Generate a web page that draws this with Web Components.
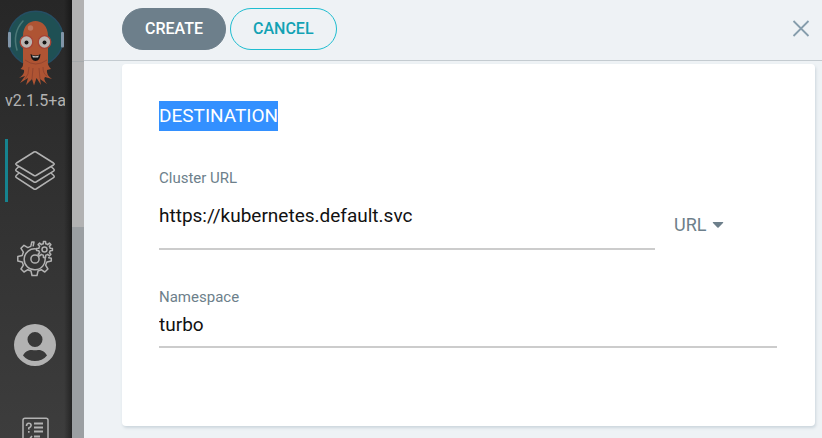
<!DOCTYPE html>
<html lang="en">
<head>
<meta charset="utf-8">
<meta name="viewport" content="width=device-width, initial-scale=1">
<title>Create application</title>
<style>
body { margin: 0; font-family: Roboto, "Liberation Sans", sans-serif; background: #eef2f5; }
</style>
</head>
<body>
<app-shell>
  <side-bar slot="side" version="v2.1.5+a">
    <nav-item label="Applications" icon="layers" active></nav-item>
    <nav-item label="Settings" icon="gears"></nav-item>
    <nav-item label="User info" icon="user"></nav-item>
    <nav-item label="Documentation" icon="docs"></nav-item>
  </side-bar>
  <action-bar>
    <pill-button kind="solid">CREATE</pill-button>
    <pill-button kind="outline">CANCEL</pill-button>
  </action-bar>
  <form-card heading="DESTINATION">
    <cluster-row>
      <text-field label="Cluster URL" value="https://kubernetes.default.svc" roomy></text-field>
      <kind-select slot="kind"></kind-select>
    </cluster-row>
    <text-field label="Namespace" value="turbo"></text-field>
  </form-card>
</app-shell>

<script>
const define = (name, html, setup) => {
  const template = document.createElement('template');
  template.innerHTML = '<style>*{box-sizing:border-box}:host{box-sizing:border-box}</style>' + html;
  customElements.define(name, class extends HTMLElement {
    constructor() {
      super();
      this.attachShadow({ mode: 'open' }).append(template.content.cloneNode(true));
    }
    connectedCallback() { if (setup) setup(this, this.shadowRoot); }
  });
};

/* Gear outline: n teeth, tooth tops at radius r, valleys at radius q. */
const gear = (cx, cy, n, r, q) => {
  const point = (rad, a) => (cx + rad * Math.cos(a)).toFixed(2) + ' ' + (cy + rad * Math.sin(a)).toFixed(2);
  const step = 2 * Math.PI / n;
  let d = '';
  for (let i = 0; i < n; i++) {
    const a = i * step - Math.PI / 2;
    d += (d ? 'L' : 'M') + point(q, a - step * .27) + 'L' + point(r, a - step * .17) +
      'L' + point(r, a + step * .17) + 'L' + point(q, a + step * .27) +
      `A${q} ${q} 0 0 1 ` + point(q, a + step * .73);
  }
  return d + 'Z';
};

const icons = {
  layers: `<g fill="none" stroke="#b2b2b2" stroke-width="1.5" stroke-linejoin="round" stroke-linecap="round">
    <path d="M20 2q1-.6 2 0L39.500 13q1.500 1 0 2L22 25.500q-1 .6-2 0L2.500 15q-1.500-1 0-2Z"/>
    <path d="M4.500 17 2.500 18.700q-1.500 1.300 0 2.500L20 32q1 .6 2 0L39.500 21.200q1.500-1.200 0-2.500L37.500 17"/>
    <path d="M4.500 23.500 2.500 25.200q-1.500 1.300 0 2.500L20 39q1 .6 2 0L39.500 27.700q1.500-1.200 0-2.500L37.500 23.500"/></g>`,
  gears: `<g transform="translate(0 1.500)" fill="none" stroke="#b2b2b2" stroke-width="1.500" stroke-linejoin="round" stroke-linecap="round">
    <path d="M20 3.500h-2.200l-1 4.400-3 1.200L10 6.800 7 9.800l2.400 3.800L8.200 17 3.800 18v4.500l4.400 1 1.200 3.200L7 30.500l3 3 3.800-2.300 3.200 1.300 1 4.500h5l1-4.500 3.200-1.300 3.600 2.300 3.100-3-2.300-3.800 1.300-3.200 4.400-1v-2.800l-2.600-.5M20 3.500l-.8 3.800"/>
    <path d="M22.500 10.500A10.500 10.500 0 1 0 31 19"/><circle cx="21" cy="20.500" r="4.100"/>
    <path d="${gear(30.500, 11, 8, 8, 5.800)}"/><circle cx="30.500" cy="11" r="2.500"/></g>`,
  user: `<path fill="#b2b2b2" fill-rule="evenodd" d="M21 0a21 21 0 1 0 0 42 21 21 0 0 0 0-42Zm0 8a7.500 7.500 0 1 1 0 15 7.500 7.500 0 0 1 0-15ZM9 31.500c2-4.500 6.500-5.800 9-5.500q3 .7 6 0c2.500-.3 7 1 9 5.500C30 35.300 25.500 37 21 37S12 35.300 9 31.500Z"/>`,
  docs: `<g fill="none" stroke="#b2b2b2"><rect x="9" y="7.200" width="25" height="31" rx="2" stroke-width="1.500"/>
    <path stroke-width="1.800" d="M20 12.500h9M20 16.500h9M20 20.500h9M20 25.500h6M20 30h9"/>
    <path stroke-width="1.600" d="M12.500 15q0-2.700 2.300-2.700t2.300 2.200q0 1.500-2.300 2.500v1.500M14.800 20v1.800M12 28l2 2 4-5"/></g>`
};

define('app-shell', `
<style>
:host { display: flex; height: 100vh; overflow: hidden; }
.strip { flex: none; width: 12px; background: linear-gradient(#a5a9ab, #a5a9ab) 0 61px / 100% 1px no-repeat, linear-gradient(#b2b2b2 227px, #9b9fa2 227px); }
main { flex: 1; min-width: 0; background: #eef2f5; }
</style>
<slot name="side"></slot><div class="strip"></div><main><slot></slot></main>`);

define('side-bar', `
<style>
:host { flex: none; display: flex; flex-direction: column; width: 72px; padding: 10px 7px 0 5px;
  background: linear-gradient(90deg, transparent 64px, #0006 72px), linear-gradient(#272727, #3d3d3d); }
.logo { flex: none; align-self: center; width: 60px; height: 80px; }
.version { flex: none; overflow: hidden; white-space: nowrap; color: #b2b2b2; font-size: 16px; line-height: 22px; }
nav { flex: none; display: flex; flex-direction: column; gap: 24px; margin-top: 27px; }
</style>
<svg class="logo" viewBox="5 10 60 80" role="img" aria-label="Argo">
  <circle cx="35.700" cy="38.500" r="27.300" fill="#1f5054" stroke="#264e63" stroke-width="1.500"/>
  <path d="M23 21Q12 33 17 50" fill="none" stroke="#4b7877" stroke-width="1.500" stroke-linecap="round"/>
  <rect x="8" y="32" width="3" height="15.500" rx="1" fill="#8195a8"/>
  <rect x="61" y="32" width="3" height="15.500" rx="1" fill="#8195a8"/>
  <path fill="#af5433" d="M23 36C23 16 48 16 48 36V61Q47 65 51 69L47 70Q46 75 52 79L45 77Q43 79 47 84L40 79 41 85 36.500 78 34 85.500 32 79 26 85 28 78 20 83 25 76 19 78Q25 74 24 70L20.500 69Q24 66 23 61Z"/>
  <path d="M25 60Q35.500 68 47 60M29 67q0 8-4 12M33 68l-1 11M39 68l1 11M43 67q0 7 4 9" fill="none" stroke="#94452f" stroke-width="1"/>
  <circle cx="30.500" cy="28" r="2.700" fill="#bd775e"/>
  <g fill="#b9b3b0" stroke="#a64334" stroke-width="1.300"><circle cx="26.500" cy="42" r="6.300"/><circle cx="44.500" cy="42" r="6.300"/></g>
  <g fill="#151515"><circle cx="26.500" cy="42.500" r="2"/><circle cx="44.500" cy="42.500" r="2"/>
  <path d="M30.500 54Q35.500 57 40.500 54 40 61 35.500 61T30.500 54Z"/></g>
  <path d="M32 55.500Q35.500 57 39 55.500L38 57.500H33Z" fill="#c5c0bd"/>
</svg>
<div class="version"></div>
<nav aria-label="Main"><slot></slot></nav>`,
(el, root) => { root.querySelector('.version').textContent = el.getAttribute('version'); });

define('nav-item', `
<style>
:host { display: block; }
a { display: flex; align-items: center; justify-content: center; height: 63px; border-left: 3px solid transparent; padding-right: 3px; }
:host([active]) a { border-color: #16838f; }
svg { flex: none; width: 42px; height: 42px; overflow: visible; }
</style>
<a href="#"><svg viewBox="0 0 42 42" aria-hidden="true"></svg></a>`,
(el, root) => {
  root.querySelector('a').setAttribute('aria-label', el.getAttribute('label'));
  root.querySelector('svg').innerHTML = icons[el.getAttribute('icon')];
});

define('action-bar', `
<style>
:host { display: flex; align-items: center; justify-content: space-between; height: 61px; padding: 0 12px 3px 38px; border-bottom: 1px solid #c4cbd0; }
.actions { display: flex; gap: 4px; }
.close { display: flex; padding: 0; border: 0; background: none; cursor: pointer; }
</style>
<div class="actions"><slot></slot></div>
<button class="close" aria-label="Close"><svg width="18" height="18" viewBox="0 0 18 18"><path d="M1.500 1l15 15M16.500 1l-15 15" stroke="#869dac" stroke-width="1.800"/></svg></button>`);

define('pill-button', `
<style>
:host { display: block; }
button { height: 42px; padding: 0 22px; border: 1px solid #6d7f8b; border-radius: 21px; background: #6d7f8b; color: #fff; font: 500 16px/40px Roboto, "Liberation Sans", sans-serif; cursor: pointer; }
:host([kind="outline"]) button { border-color: #1fbdd0; background: transparent; color: #12a2b4; }
</style>
<button type="button"><slot></slot></button>`);

define('form-card', `
<style>
:host { display: block; min-height: 362px; margin: 3px 7px 12px 38px; padding: 37px 38px 37px 37px; border-radius: 4px; background: #fff; box-shadow: 1px 2px 3px #ccd6dd; }
h2 { width: fit-content; margin: 0 0 38px; background: #3390ff; color: #fff; font-size: 19px; font-weight: 400; line-height: 30px; }
form { display: flex; flex-direction: column; gap: 38px; }
</style>
<h2></h2><form><slot></slot></form>`,
(el, root) => { root.querySelector('h2').textContent = el.getAttribute('heading'); });

define('cluster-row', `
<style>
:host { display: flex; align-items: flex-end; gap: 19px; }
.field { flex: 1; min-width: 0; }
.kind { flex: none; width: 103px; padding-bottom: 10px; }
</style>
<div class="field"><slot></slot></div><div class="kind"><slot name="kind"></slot></div>`);

define('text-field', `
<style>
:host { display: block; }
label { display: block; color: #6d7f8b; font-size: 15px; line-height: 18px; }
input { display: block; width: 100%; height: 42px; padding: 0 0 4px; border: 0; border-bottom: 2px solid #ccc; border-radius: 0; outline: 0; background: transparent; color: #111; font: 19px Roboto, "Liberation Sans", sans-serif; }
:host([roomy]) input { height: 63px; padding: 0 0 4px; }
</style>
<label for="box"></label><input id="box" type="text">`,
(el, root) => {
  root.querySelector('label').textContent = el.getAttribute('label');
  root.querySelector('input').value = el.getAttribute('value');
});

define('kind-select', `
<style>
:host { display: flex; align-items: center; gap: 5px; color: #6d7f8b; }
select { appearance: none; padding: 0; border: 0; background: none; color: inherit; font: 18px/30px Roboto, "Liberation Sans", sans-serif; }
</style>
<select aria-label="Destination type"><option>URL</option></select>
<svg width="12" height="8" viewBox="0 0 12 8" aria-hidden="true"><path d="M1.200 1H10.800Q11.700 1.200 11 2L6.600 6.500Q6 7 5.400 6.500L1 2Q.3 1.200 1.200 1Z" fill="currentColor"/></svg>`);
</script>
</body>
</html>
